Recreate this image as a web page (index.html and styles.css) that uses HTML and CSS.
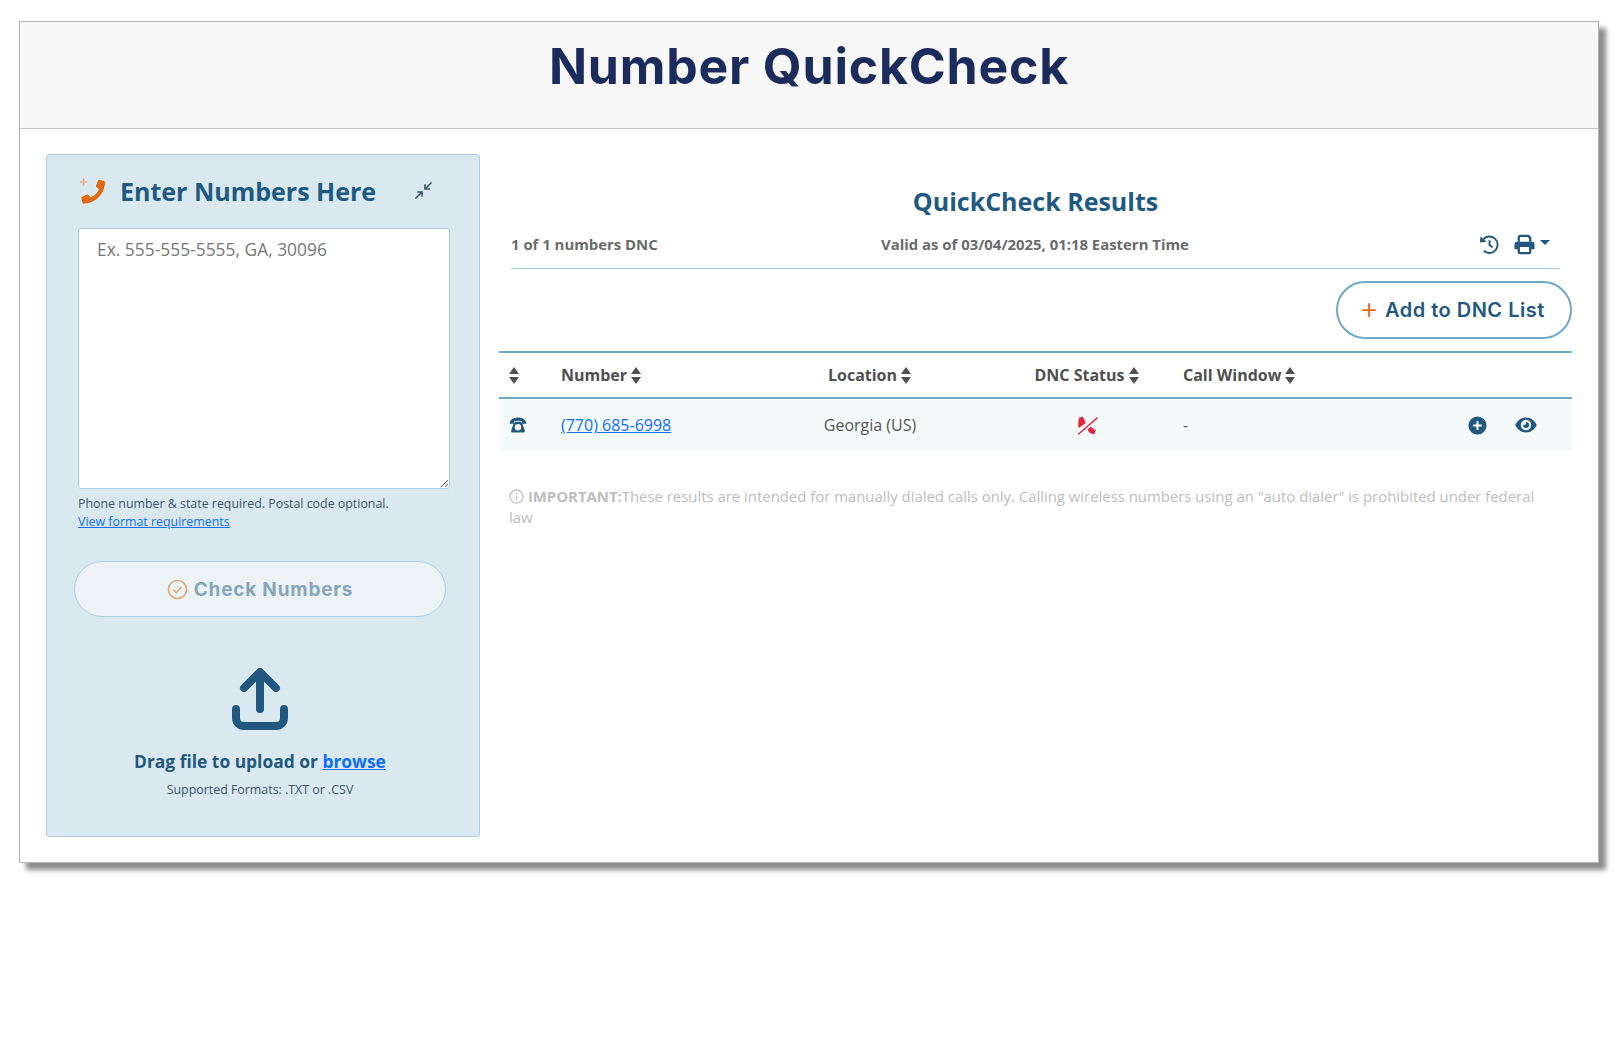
FILE: index.html
```html
<!DOCTYPE html>
<html lang="en">
<head>
    <meta charset="UTF-8">
    <meta name="viewport" content="width=device-width, initial-scale=1.0">
    <title>Number QuickCheck</title>
    <link rel="stylesheet" href="styles.css">
</head>
<body>
    <div class="card">
        <header class="card-header">
            <h1>Number QuickCheck</h1>
        </header>
        <div class="card-body">
            <section class="entry-panel">
                <div class="entry-head">
                    <svg class="icon-phone-add" viewBox="0 0 30 30">
                        <path class="plus-mark" d="M6 1.500v8M2 5.500h8"/>
                        <g transform="translate(29 3) scale(-0.05 0.05)"><path class="handset" d="M497.39 361.8l-112-48a24 24 0 0 0-28 6.9l-49.6 60.6A370.66 370.66 0 0 1 130.6 204.11l60.6-49.6a23.94 23.94 0 0 0 6.9-28l-48-112A24.16 24.16 0 0 0 122.6.61l-104 24A24 24 0 0 0 0 48c0 256.5 207.9 464 464 464a24 24 0 0 0 23.4-18.6l24-104a24.29 24.29 0 0 0-14.01-27.6z"/></g>
                    </svg>
                    <h2>Enter Numbers Here</h2>
                    <svg class="icon-collapse" viewBox="0 0 20 20">
                        <path d="M18.500 1.500L11.500 8.500M11.500 3.500v5h5.500M1.500 18.500L8.500 11.500M3.500 11.500h5v5"/>
                    </svg>
                </div>
                <textarea class="number-input" placeholder="Ex. 555-555-5555, GA, 30096"></textarea>
                <p class="hint">Phone number &amp; state required. Postal code optional.</p>
                <a class="hint-link" href="#">View format requirements</a>
                <button class="check-btn" disabled>
                    <svg class="icon-check" viewBox="0 0 20 20">
                        <circle cx="10" cy="10" r="8.600"/>
                        <path d="M6.200 10.300l2.700 2.600 4.900-5.300"/>
                    </svg>
                    Check Numbers
                </button>
                <svg class="icon-upload" viewBox="0 0 56 62">
                    <path d="M28 41V5M12 20L28 4l16 16M4 41v9a8 8 0 0 0 8 8h32a8 8 0 0 0 8-8v-9"/>
                </svg>
                <p class="drop-text">Drag file to upload or <a href="#">browse</a></p>
                <p class="formats">Supported Formats: .TXT or .CSV</p>
            </section>

            <section class="results">
                <h2>QuickCheck Results</h2>
                <div class="results-meta">
                    <span class="meta-count">1 of 1 numbers DNC</span>
                    <span class="meta-valid">Valid as of 03/04/2025, 01:18 Eastern Time</span>
                    <span class="meta-tools">
                        <svg class="icon-history" viewBox="0 0 22 22">
                            <path d="M4.500 5.500A8.600 8.600 0 1 1 5 17.500M11 6.500V11.500l3.200 2.500"/>
                            <path class="solid" d="M1.500 2.500l6.500 5.500-7 1z"/>
                        </svg>
                        <svg class="icon-print" viewBox="0 0 22 22">
                            <path d="M5 8V3.500a1.500 1.500 0 0 1 1.500-1.500H15l2 2v4" class="line"/>
                            <path class="solid" d="M3 8h16a2.500 2.500 0 0 1 2.500 2.500V16H17v-2.500H5V16H.5v-5.500A2.500 2.500 0 0 1 3 8z"/>
                            <path class="line" d="M5 13.500V19a1 1 0 0 0 1 1h10a1 1 0 0 0 1-1v-5.500"/>
                        </svg>
                        <span class="caret"></span>
                    </span>
                </div>
                <div class="results-actions">
                    <button class="add-btn"><span class="add-plus">+</span> Add to DNC List</button>
                </div>
                <table class="results-table">
                    <colgroup>
                        <col class="col-type">
                        <col class="col-number">
                        <col class="col-location">
                        <col class="col-status">
                        <col class="col-window">
                        <col class="col-actions">
                    </colgroup>
                    <thead>
                        <tr>
                            <th><span class="sort"></span></th>
                            <th>Number<span class="sort"></span></th>
                            <th class="center">Location<span class="sort"></span></th>
                            <th class="center">DNC Status<span class="sort"></span></th>
                            <th>Call Window<span class="sort"></span></th>
                            <th></th>
                        </tr>
                    </thead>
                    <tbody>
                        <tr>
                            <td>
                                <svg class="icon-tel" viewBox="0 0 18 16">
                                    <path d="M.8 6.800C.3 2.500 5 .5 9 .5s8.700 2 8.200 6.300H13V4.300C11 3.600 7 3.600 5 4.300v2.500z"/>
                                    <path fill-rule="evenodd" d="M4.500 7L6 4.800h6L13.500 7l2.300 6.500a1.500 1.500 0 0 1-1.500 2H3.700a1.500 1.500 0 0 1-1.500-2zM9 7a3.200 3.200 0 1 0 0 6.400A3.200 3.200 0 0 0 9 7z"/>
                                </svg>
                            </td>
                            <td><a href="#">(770) 685-6998</a></td>
                            <td class="center">Georgia (US)</td>
                            <td class="center">
                                <svg class="icon-dnc" viewBox="0 0 20 18">
                                    <path class="solid" d="M2 1.500L5.500.5 8.500 6.500 6 8.300 1.500 11.500C1 8 1 4 2 1.500zM10 13l3-3 5 4-1.500 3c-2.500.5-5-1-6.500-4z"/>
                                    <path class="line" d="M1 17.500L19.500 1.500"/>
                                </svg>
                            </td>
                            <td>-</td>
                            <td>
                                <div class="row-actions">
                                    <svg class="icon-add" viewBox="0 0 20 20">
                                        <circle cx="10" cy="10" r="9.500"/>
                                        <path d="M10 5.500v9M5.500 10h9"/>
                                    </svg>
                                    <svg class="icon-eye" viewBox="0 0 22 16">
                                        <path fill-rule="evenodd" d="M11 .5c5 0 9 3.500 10.800 7.500C20 12 16 15.500 11 15.500S2 12 .2 8C2 4 6 .5 11 .5zm0 2.300a5.200 5.200 0 1 0 0 10.400 5.200 5.200 0 0 0 0-10.400zM11 5a3 3 0 1 1-3 3c1.200.6 3.600-.8 3-3z"/>
                                    </svg>
                                </div>
                            </td>
                        </tr>
                    </tbody>
                </table>
                <p class="important">
                    <svg class="icon-info" viewBox="0 0 16 16">
                        <circle cx="8" cy="8" r="7"/>
                        <path d="M8 7v5M8 4v1.500"/>
                    </svg>
                    <strong>IMPORTANT:</strong>These results are intended for manually dialed calls only. Calling wireless numbers using an "auto dialer" is prohibited under federal law
                </p>
            </section>
        </div>
    </div>
</body>
</html>
```

FILE: styles.css
```css
html, body {
    height: 100%;
}
body {
    margin: 0;
    padding: 21px 0 0 19px;
    box-sizing: border-box;
    overflow: hidden;
    background-color: white;
    font-family: "Open Sans", "Noto Sans", sans-serif;
    color: #555;
}
p, h1, h2 {
    margin: 0;
}
svg {
    display: block;
    flex: none;
}
.card {
    width: 1578px;
    height: 840px;
    border: 1px solid #b5b5b5;
    background-color: white;
    box-shadow: 7px 7px 5px rgba(0,0,0,0.45);
}
.card-header {
    height: 107px;
    box-sizing: border-box;
    background-color: #f8f8f8;
    border-bottom: 1px solid #c4c4c4;
    text-align: center;
}
.card-header h1 {
    padding-top: 12px;
    font-family: Inter, sans-serif;
    font-size: 50px;
    line-height: 64px;
    font-weight: 700;
    letter-spacing: 0.8px;
    color: #1a2b5c;
}
.card-body {
    display: flex;
    align-items: flex-start;
    padding: 25px 0 0 26px;
}

/* left panel */
.entry-panel {
    width: 434px;
    height: 683px;
    box-sizing: border-box;
    padding: 0 30px 0 31px;
    background-color: #dae8f0;
    border: 1px solid #aecde0;
    border-radius: 3px;
}
.entry-head {
    display: flex;
    align-items: center;
    height: 71px;
    padding: 0 0 2px;
}
.entry-head h2 {
    margin-left: 14px;
    font-size: 25px;
    font-weight: 700;
    color: #205a82;
}
.icon-phone-add {
    width: 28px;
    height: 28px;
    fill: #dd6a17;
}
.handset {
    stroke: rgba(255,255,255,0.65);
    stroke-width: 34;
    paint-order: stroke;
}
.plus-mark {
    fill: none;
    stroke: #f0a878;
    stroke-width: 1.500;
}
.icon-collapse {
    width: 19px;
    height: 19px;
    margin-left: 38px;
    fill: none;
    stroke: #35566e;
    stroke-width: 1.600;
}
.number-input {
    display: block;
    width: 372px;
    height: 261px;
    box-sizing: border-box;
    padding: 8px 18px;
    background-color: white;
    border: 1px solid #aecde0;
    border-radius: 3px;
    font-family: "Open Sans", sans-serif;
    font-size: 17.400px;
    line-height: 24px;
    color: #555;
}
.number-input::placeholder {
    color: #777;
    opacity: 1;
}
.hint {
    margin-top: 6px;
    font-size: 12.400px;
    line-height: 18px;
    color: #41566a;
}
.hint-link {
    display: block;
    font-size: 12.400px;
    line-height: 18px;
    color: #0d6efd;
}
.check-btn {
    display: flex;
    align-items: center;
    justify-content: center;
    gap: 6px;
    width: 372px;
    height: 56px;
    margin: 30px 0 0 -4px;
    background-color: #ecf3f7;
    border: 1px solid #aecde0;
    border-radius: 28px;
    font-family: Inter, sans-serif;
    font-size: 19px;
    font-weight: 700;
    letter-spacing: 0.8px;
    color: #87a5b9;
}
.icon-check {
    width: 21px;
    height: 21px;
    fill: none;
    stroke: #e3a878;
    stroke-width: 1.500;
}
.icon-upload {
    width: 56px;
    height: 62px;
    margin: 51px 0 0 154px;
    fill: none;
    stroke: #22587f;
    stroke-width: 8;
    stroke-linecap: round;
    stroke-linejoin: round;
}
.drop-text {
    margin: 18px 0 0 -7px;
    text-align: center;
    font-size: 17.400px;
    font-weight: 700;
    line-height: 26px;
    color: #22587f;
}
.drop-text a {
    color: #0d6efd;
}
.formats {
    margin: 7px 0 0 -7px;
    text-align: center;
    font-size: 12.400px;
    line-height: 18px;
    color: #41566a;
}

/* results */
.results {
    width: 1073px;
    margin-left: 19px;
    padding-top: 30px;
}
.results > h2 {
    text-align: center;
    font-size: 25px;
    font-weight: 700;
    line-height: 34px;
    color: #205a82;
}
.results-meta {
    display: flex;
    align-items: center;
    height: 38px;
    margin: 7px 12px 0;
    padding-bottom: 5px;
    border-bottom: 1px solid #a6cbdc;
    font-size: 14.900px;
    font-weight: 700;
    color: #6b6b6b;
}
.meta-count {
    width: 370px;
}
.meta-tools {
    display: flex;
    align-items: center;
    margin-left: auto;
    padding-right: 10px;
}
.icon-history {
    width: 21px;
    height: 21px;
    fill: none;
    stroke: #22587f;
    stroke-width: 2;
}
.icon-history .solid {
    fill: #22587f;
    stroke: none;
}
.icon-print {
    width: 21px;
    height: 21px;
    margin-left: 14px;
}
.icon-print .solid {
    fill: #22587f;
}
.icon-print .line {
    fill: none;
    stroke: #22587f;
    stroke-width: 2.400;
}
.caret {
    width: 0;
    height: 0;
    margin: -3px 0 0 5px;
    border-left: 5px solid transparent;
    border-right: 5px solid transparent;
    border-top: 5px solid #22587f;
}
.results-actions {
    display: flex;
    justify-content: flex-end;
    padding: 12px 0;
}
.add-btn {
    width: 236px;
    height: 58px;
    padding: 0 4px 0 0;
    background-color: white;
    border: 2px solid #6fa9c7;
    border-radius: 29px;
    font-family: Inter, sans-serif;
    font-size: 20px;
    font-weight: 600;
    letter-spacing: 0.5px;
    color: #22587f;
}
.add-plus {
    font-weight: 300;
    font-size: 30px;
    line-height: 20px;
    vertical-align: -2px;
    color: #dd6a17;
}
.results-table {
    width: 100%;
    table-layout: fixed;
    border-collapse: collapse;
    font-size: 16px;
}
.col-type { width: 52px; }
.col-number { width: 188px; }
.col-location { width: 262px; }
.col-status { width: 172px; }
.col-window { width: 267px; }
.results-table th {
    height: 44px;
    padding: 0 10px;
    text-align: left;
    font-weight: 700;
    color: #4f4f4f;
    border-top: 2px solid #6fa9c7;
    border-bottom: 2px solid #6fa9c7;
}
.results-table td {
    height: 52px;
    padding: 0 10px;
    background-color: #f5fafb;
    color: #555;
}
.results-table th.center, .results-table td.center {
    text-align: center;
}
.results-table a {
    color: #0d6efd;
}
.sort {
    display: inline-block;
    position: relative;
    width: 11px;
    height: 17px;
    margin-left: 4px;
    vertical-align: -3px;
}
th:first-child .sort {
    margin-left: 0;
}
.sort::before, .sort::after {
    content: "";
    position: absolute;
    left: 0;
    border-left: 5.500px solid transparent;
    border-right: 5.500px solid transparent;
}
.sort::before {
    top: 0;
    border-bottom: 7.500px solid #4f4f4f;
}
.sort::after {
    bottom: 0;
    border-top: 7.500px solid #4f4f4f;
}
.icon-tel {
    width: 18px;
    height: 16px;
    fill: #22587f;
}
.icon-dnc {
    width: 21px;
    height: 19px;
    margin: 0 auto;
}
.icon-dnc .solid {
    fill: #dc2b3e;
}
.icon-dnc .line {
    fill: none;
    stroke: #dc2b3e;
    stroke-width: 1.300;
}
.row-actions {
    display: flex;
    align-items: center;
    justify-content: flex-end;
    gap: 28px;
    padding-right: 25px;
}
.icon-add {
    width: 19px;
    height: 19px;
}
.icon-add circle {
    fill: #22587f;
}
.icon-add path {
    stroke: white;
    stroke-width: 2.200;
}
.icon-eye {
    width: 22px;
    height: 16px;
    fill: #22587f;
}
.important {
    margin: 35px 30px 0 10px;
    font-size: 14.900px;
    line-height: 20.500px;
    color: #bdbdbd;
}
.important strong {
    font-weight: 700;
}
.icon-info {
    display: inline-block;
    width: 15px;
    height: 15px;
    vertical-align: -2px;
    fill: none;
    stroke: #bdbdbd;
    stroke-width: 1.400;
}
```
